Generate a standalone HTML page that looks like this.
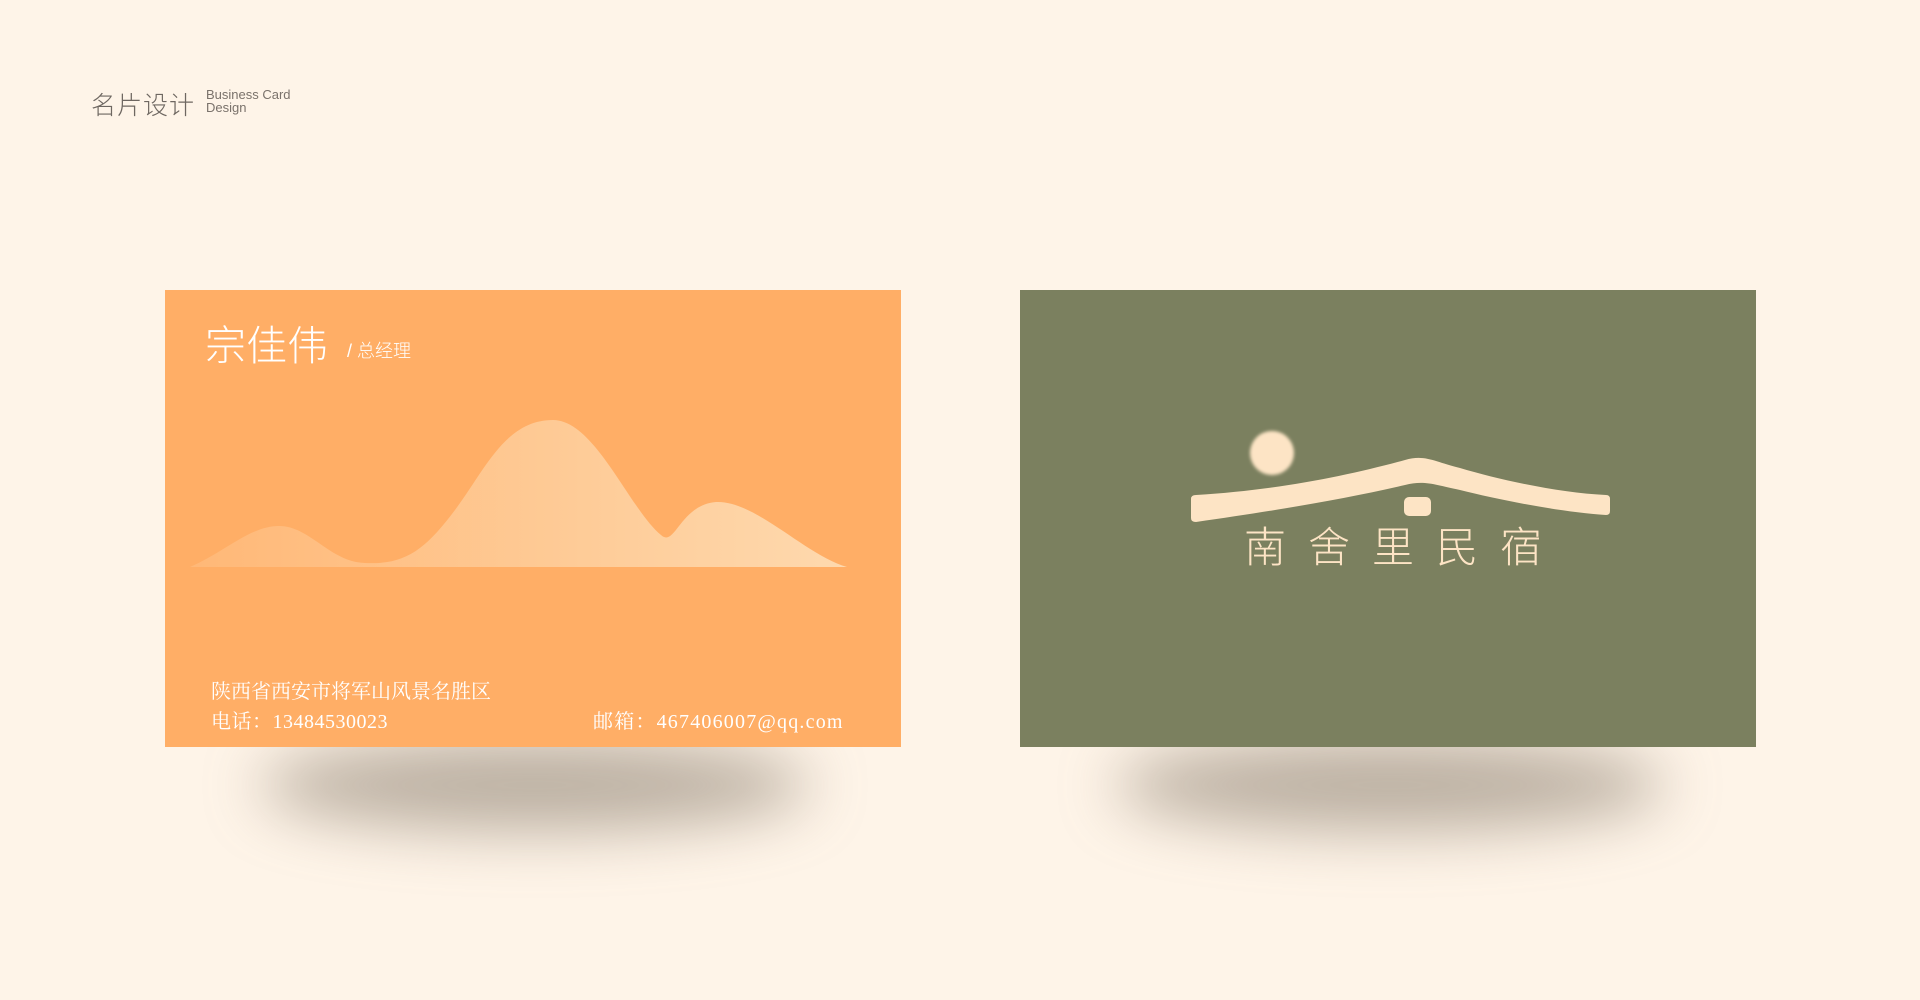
<!DOCTYPE html>
<html><head><meta charset="utf-8"><style>
body{margin:0;width:1920px;height:1000px;background:#fef4e8;position:relative;overflow:hidden;font-family:"Liberation Sans","Noto Sans CJK SC",sans-serif}
.abs{position:absolute}
.shadow{position:absolute;height:90px;border-radius:50%;background:rgba(120,105,90,.5);filter:blur(30px)}
.card{position:absolute;top:290px;width:736px;height:457px}
.s{font-family:'Liberation Serif','Noto Serif CJK SC',serif;color:#fff;font-size:20px}
</style></head><body>
<div class="abs" style="left:91px;top:86px;font-size:25px;color:#6e6761;font-weight:300;letter-spacing:1px">名片设计</div>
<div class="abs" style="left:206px;top:88px;font-size:13px;line-height:13px;color:#7a726b">Business Card<br>Design</div>

<div class="shadow" style="left:260px;top:740px;width:550px"></div>
<div class="shadow" style="left:1115px;top:740px;width:550px"></div>

<div class="card" style="left:165px;background:#ffae66">
  <div class="abs" style="left:40px;top:22px;font-size:41px;color:#fff;font-weight:300">宗佳伟</div>
  <div class="abs" style="left:182px;top:47px;font-size:18px;color:#fff;font-weight:300">/ 总经理</div>
  <svg class="abs" style="left:0;top:0" width="736" height="457">
    <defs><linearGradient id="g" x1="0" x2="1"><stop offset="0" stop-color="#ffb877"/><stop offset="1" stop-color="#fed9ae"/></linearGradient></defs>
    <path d="M25 277 C60 262 85 236 114 236 C145 236 165 272 200 273 C240 275 260 260 290 220 C320 180 340 130 388 130 C430 130 465 220 496 245 C510 258 515 215 551 212 C590 210 640 265 682 277 Z" fill="url(#g)"/>
  </svg>
  <div class="abs s" style="left:46px;top:385px">陕西省西安市将军山风景名胜区</div>
  <div class="abs s" style="left:46px;top:415px;letter-spacing:0.5px">电话：13484530023</div>
  <div class="abs s" style="left:428px;top:415px;letter-spacing:1.2px">邮箱：467406007@qq.com</div>
</div>

<div class="card" style="left:1020px;background:#7b805f">
  <svg class="abs" style="left:0;top:0" width="736" height="457">
    <defs><filter id="b"><feGaussianBlur stdDeviation="1.5"/></filter></defs>
    <circle cx="252" cy="163" r="22" fill="#fde4c5" filter="url(#b)"/>
    <path d="M176 205 C260 200 330 185 385 170 C405 164 415 172 440 178 C480 190 540 203 586 205 Q590 205 590 209 L590 221 Q590 225 586 225 C540 222 480 210 440 200 C415 195 405 190 385 195 C330 208 260 220 176 232 Q171 232 171 228 L171 209 Q171 205 176 205 Z" fill="#fde4c5"/>
    <rect x="384" y="207" width="27" height="19" rx="5" fill="#fde4c5"/>
  </svg>
  <div class="abs" style="left:224px;top:224px;font-size:42px;color:#fde4c5;font-weight:300;letter-spacing:22px">南舍里民宿</div>
</div>
</body></html>
